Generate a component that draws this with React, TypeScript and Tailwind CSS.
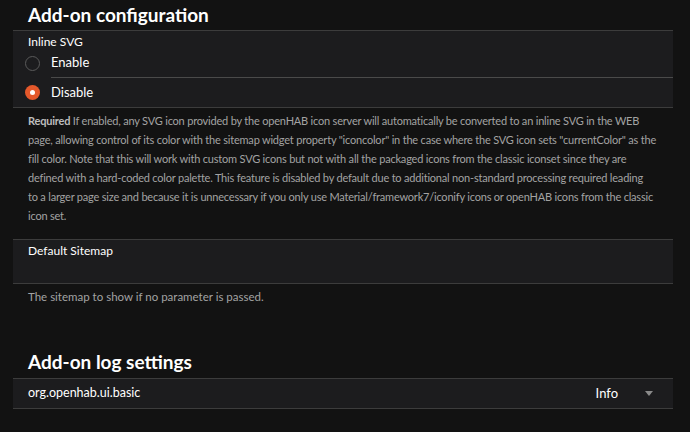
import { useState } from 'react'

const font = { fontFamily: 'Lato, "Noto Sans", sans-serif' }

const helpLines = [
  'If enabled, any SVG icon provided by the openHAB icon server will automatically be converted to an inline SVG in the WEB',
  'page, allowing control of its color with the sitemap widget property "iconcolor" in the case where the SVG icon sets "currentColor" as the',
  'fill color. Note that this will work with custom SVG icons but not with all the packaged icons from the classic iconset since they are',
  'defined with a hard-coded color palette. This feature is disabled by default due to additional non-standard processing required leading',
  'to a larger page size and because it is unnecessary if you only use Material/framework7/iconify icons or openHAB icons from the classic',
  'icon set.',
]

function Radio({ checked, label, onClick, divider }: { checked: boolean; label: string; onClick: () => void; divider?: boolean }) {
  return (
    <button type="button" onClick={onClick} className="flex h-[29px] w-full items-center text-left">
      <span className="flex w-[38px] shrink-0 justify-center">
        {checked ? (
          <span className="flex h-[15px] w-[15px] items-center justify-center rounded-full bg-[#e4582b]">
            <span className="h-[5px] w-[5px] rounded-full bg-white" />
          </span>
        ) : (
          <span className="h-[15px] w-[15px] rounded-full border-[1.5px] border-[#5a5a5a]" />
        )}
      </span>
      <span className={`flex h-full flex-1 items-center text-[13px] text-white ${divider ? 'border-b border-[#4a4a4a]' : ''}`}>
        {label}
      </span>
    </button>
  )
}

export default function App() {
  const [inline, setInline] = useState(false)

  return (
    <div className="h-[432px] w-[690px] overflow-hidden bg-[#121212] pl-[13px]" style={font}>
      <h2 className="pl-[15px] pt-[1px] text-[19px] leading-[28px] font-bold text-white">Add-on configuration</h2>

      <div className="mt-[1px] w-[660px] border-y border-[#3c3c3c] bg-[#1c1c1e]">
        <div className="px-[15px] pt-[4px] text-[12px] leading-[14px] text-white">Inline SVG</div>
        <Radio checked={inline} label="Enable" onClick={() => setInline(true)} divider />
        <Radio checked={!inline} label="Disable" onClick={() => setInline(false)} />
      </div>

      <div className="px-[15px] pt-[3px] text-[11px] leading-[19px] tracking-[-0.2px] whitespace-nowrap text-[#a3a3a3]">
        {helpLines.map((line, i) => (
          <div key={i}>
            {i === 0 && <b className="font-bold text-[#bdbdbd]">Required </b>}
            {line}
          </div>
        ))}
      </div>

      <div className="mt-[14px] h-[45px] w-[660px] border-y border-[#3c3c3c] bg-[#1c1c1e] px-[15px] pt-[4px]">
        <div className="text-[12px] leading-[14px] text-white">Default Sitemap</div>
      </div>
      <p className="px-[15px] pt-[3px] text-[11.5px] leading-[19px] text-[#a3a3a3]">The sitemap to show if no parameter is passed.</p>

      <h2 className="mt-[42px] pl-[15px] text-[19px] leading-[28px] font-bold text-white">Add-on log settings</h2>
      <div className="mt-[2px] flex h-[31px] w-[660px] items-center border-y border-[#3c3c3c] bg-[#1c1c1e] px-[15px]">
        <span className="flex-1 text-[12.5px] text-white">org.openhab.ui.basic</span>
        <span className="mr-[27px] text-[13px] text-white">Info</span>
        <svg width="8" height="5" viewBox="0 0 8 5" className="mr-[5px]">
          <path d="M0 0h8L4 5z" fill="#8a8a8a" />
        </svg>
      </div>
    </div>
  )
}
